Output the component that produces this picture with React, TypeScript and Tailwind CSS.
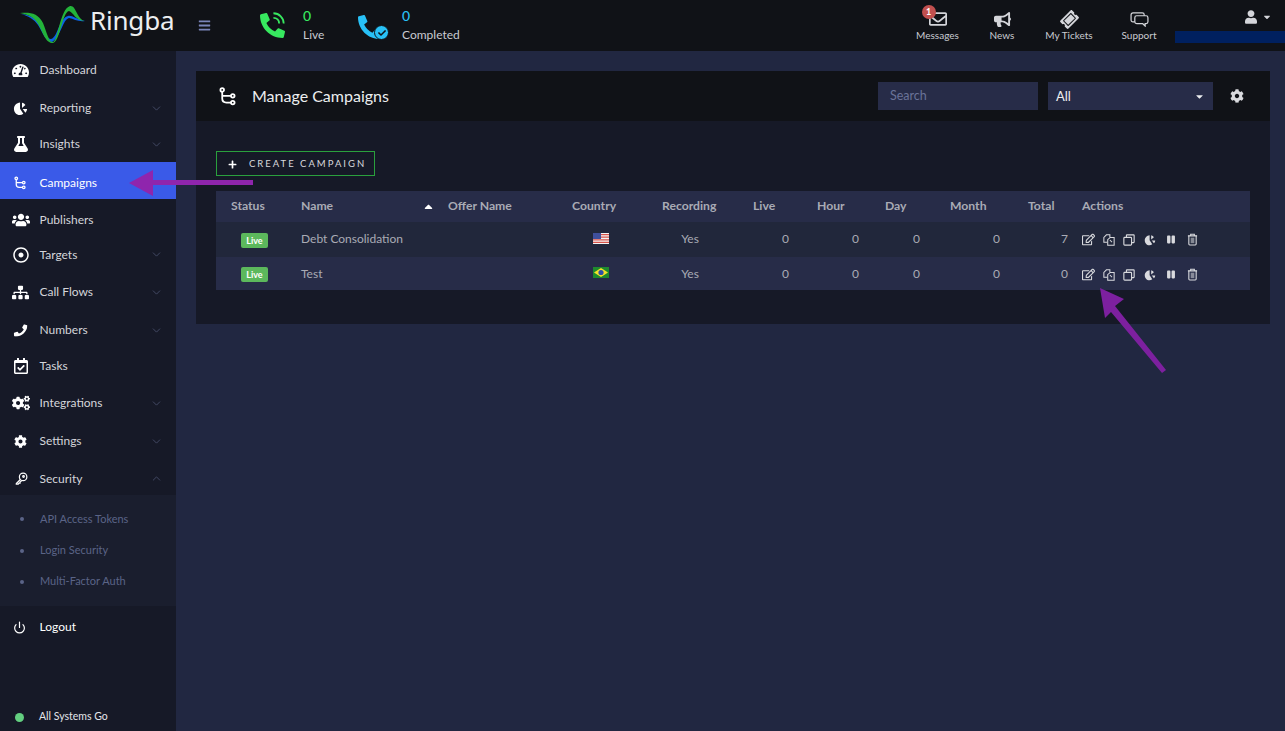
import type { ReactNode } from "react";
import { ChevronDown, ChevronUp, Power } from "lucide-react";
import {
  FaBars,
  FaBullhorn,
  FaCaretDown,
  FaCaretUp,
  FaCheck,
  FaCog,
  FaCogs,
  FaFlask,
  FaPause,
  FaPhone,
  FaPhoneAlt,
  FaPlus,
  FaRegCalendarCheck,
  FaRegDotCircle,
  FaRegEdit,
  FaRegEnvelope,
  FaSitemap,
  FaTachometerAlt,
  FaTicketAlt,
  FaUser,
  FaUsers,
} from "react-icons/fa";

function PieIcon({ className }: { className?: string }) {
  return (
    <svg viewBox="0 0 16 16" className={className} fill="currentColor">
      <path d="M7.5 1.5 V8.2 L11 13.6 C9.8 14.5 8.6 15 7.2 15 C3.6 15 1 12 1 8.3 C1 4.8 3.8 1.8 7.5 1.5 Z" />
      <path d="M9.6 1.8 C11.2 2.2 12.4 3 13.2 4.2 L9.6 7.4 Z" />
      <path d="M10.4 8.6 L15 8.6 C15 10 14.4 11.2 13.2 12.4 Z" />
    </svg>
  );
}

function BranchIcon({ className }: { className?: string }) {
  return (
    <svg viewBox="0 0 16 18" className={className} fill="none" stroke="currentColor" strokeWidth="1.7">
      <circle cx="3" cy="2.8" r="1.7" />
      <circle cx="13" cy="8.4" r="1.7" />
      <circle cx="13" cy="14.8" r="1.7" />
      <path d="M3 4.5 V11 C3 13.6 5 14.8 7 14.8 H11.3 M3.4 8.4 H11.3" />
    </svg>
  );
}

function KeyIcon({ className }: { className?: string }) {
  return (
    <svg viewBox="0 0 16 16" className={className} fill="none" stroke="currentColor" strokeWidth="1.5">
      <circle cx="10" cy="6" r="4.6" />
      <circle cx="10.5" cy="5.5" r="1" />
      <path d="M6.6 9.2 L1.6 14.2 V15 H4 L5 13.6 H6.2 V12.4 L8 11" />
    </svg>
  );
}

function CopyIcon({ className }: { className?: string }) {
  return (
    <svg viewBox="0 0 14 14" className={className} fill="none" stroke="currentColor" strokeWidth="1.2">
      <path d="M5 9.5 H1 V4 L4 1 H8 V4" />
      <path d="M5.5 6.5 L8.5 4 H13 V13 H5.5 Z" />
      <path d="M8 7 L10.5 9.5" />
    </svg>
  );
}

function CloneIcon({ className }: { className?: string }) {
  return (
    <svg viewBox="0 0 14 14" className={className} fill="none" stroke="currentColor" strokeWidth="1.3">
      <rect x="1" y="4" width="9" height="9" rx="1" />
      <path d="M4 4 V1.6 C4 1.2 4.3 1 4.6 1 H12.4 C12.8 1 13 1.2 13 1.6 V9.4 C13 9.8 12.8 10 12.4 10 H10" />
    </svg>
  );
}

function TrashIcon({ className }: { className?: string }) {
  return (
    <svg viewBox="0 0 12 14" className={className} fill="none" stroke="currentColor" strokeWidth="1.2">
      <path d="M1 3 H11 M4 3 V1.2 H8 V3" />
      <path d="M2 3 V12 C2 12.6 2.4 13 3 13 H9 C9.6 13 10 12.6 10 12 V3" />
      <rect x="4" y="5" width="4" height="6" fill="currentColor" fillOpacity="0.55" stroke="none" />
    </svg>
  );
}

function SupportIcon({ className }: { className?: string }) {
  return (
    <svg viewBox="0 0 20 16" className={className} fill="none" stroke="currentColor" strokeWidth="1.3">
      <path d="M5 10.5 H3 C1.8 10.5 1 9.7 1 8.6 V3 C1 1.9 1.8 1 3 1 H13 C14.2 1 15 1.9 15 3 V4" />
      <path d="M7 4 H17 C18.2 4 19 4.8 19 6 V10.5 C19 11.7 18.2 12.5 17 12.5 H16 V15 L13.5 12.5 H7 C5.8 12.5 5 11.7 5 10.5 V6 C5 4.8 5.8 4 7 4 Z" />
    </svg>
  );
}

function Logo() {
  return (
    <svg viewBox="0 0 70 40" className="w-[70px] h-[40px] shrink-0">
      <path
        d="M1 10 C12 11 18 15 24 27 C28 35 30 36 33 34 C38 30 40 14 48 12 C52 11 56 15 65 17 C58 18 54 15 49 14 C43 15 40 34 32 38 C26 38 23 29 18 21 C14 15 8 12 1 10 Z"
        fill="#0b63e5"
      />
      <path
        d="M0 9 C10 8 18 9 23 19 C27 29 29 39 33 38 C38 37 40 5 50 2 C56 1 56 13 64 17 C56 17 53 8 49 7 C42 8 40 40 32 39 C24 38 22 24 16 17 C12 12 6 10 0 9 Z"
        fill="#23b33a"
      />
    </svg>
  );
}

function UsFlag() {
  return (
    <svg viewBox="0 0 16 11" className="w-4 h-[11px] mx-auto">
      <rect width="16" height="11" fill="#f3f3f3" />
      <path d="M0 1h16v1.2H0zM0 3.6h16v1.2H0zM0 6.2h16v1.2H0zM0 8.8h16v1.2H0z" fill="#d9534a" />
      <rect width="8" height="6" fill="#3f4f9c" />
    </svg>
  );
}

function BrFlag() {
  return (
    <svg viewBox="0 0 16 11" className="w-4 h-[11px] mx-auto">
      <rect width="16" height="11" fill="#1e8a2e" />
      <path d="M8 1 L15 5.5 L8 10 L1 5.5 Z" fill="#f4e32a" />
      <circle cx="8" cy="5.5" r="2.6" fill="#2f4fa8" />
    </svg>
  );
}

type NavItem = { label: string; icon: ReactNode; row: string; chevron?: boolean };

const navTop: NavItem[] = [
  { label: "Dashboard", icon: <FaTachometerAlt className="w-[17px] h-[17px]" />, row: "h-[38px]" },
  { label: "Reporting", icon: <PieIcon className="w-[15px] h-[15px]" />, row: "h-[37px] pt-[1px]", chevron: true },
  { label: "Insights", icon: <FaFlask className="w-[16px] h-[16px]" />, row: "h-[36px]", chevron: true },
];

const navMiddle: NavItem[] = [
  { label: "Publishers", icon: <FaUsers className="w-[18px] h-[18px]" />, row: "h-[38px] pt-[3px]" },
  { label: "Targets", icon: <FaRegDotCircle className="w-[16px] h-[16px]" />, row: "h-[36px] pb-[1px]", chevron: true },
  { label: "Call Flows", icon: <FaSitemap className="w-[17px] h-[17px]" />, row: "h-[38px]", chevron: true },
  { label: "Numbers", icon: <FaPhone className="w-[13px] h-[13px] rotate-[5deg]" />, row: "h-[38px]", chevron: true },
  { label: "Tasks", icon: <FaRegCalendarCheck className="w-4 h-4" />, row: "h-[35px] pb-[2px]" },
  { label: "Integrations", icon: <FaCogs className="w-[18px] h-[18px]" />, row: "h-[38px]", chevron: true },
  { label: "Settings", icon: <FaCog className="w-[13px] h-[13px]" />, row: "h-[39px] pb-[1px]", chevron: true },
];

function NavRow({ item }: { item: NavItem }) {
  return (
    <div className={"flex items-center text-[12px] text-[#d4d5da] pr-[13px] pl-[0.5px] " + item.row}>
      <span className="w-[39px] flex justify-center pl-[3px] pr-[2px] text-white shrink-0">{item.icon}</span>
      <span className="flex-1">{item.label}</span>
      {item.chevron && <ChevronDown className="w-[13px] h-[13px] text-[#4b5270]" strokeWidth={1.5} />}
    </div>
  );
}

function Sidebar() {
  return (
    <aside className="w-[176px] shrink-0 bg-[#161927] flex flex-col relative">
      {navTop.map((item) => (
        <NavRow key={item.label} item={item} />
      ))}
      <div className="h-[37px] bg-[#3a5ae8] flex items-center text-[12px] text-white pt-[4px] pl-[0.5px]">
        <span className="w-[39px] flex justify-center text-white">
          <BranchIcon className="w-3 h-3.5" />
        </span>
        Campaigns
      </div>
      {navMiddle.map((item) => (
        <NavRow key={item.label} item={item} />
      ))}
      <div className="h-[34px] pt-[1px] flex items-center text-[12px] text-[#d4d5da] pr-[13px] pl-[0.5px]">
        <span className="w-[39px] flex justify-center text-white pl-[2px]">
          <KeyIcon className="w-[13px] h-[13px]" />
        </span>
        <span className="flex-1">Security</span>
        <ChevronUp className="w-[13px] h-[13px] text-[#4b5270]" strokeWidth={1.5} />
      </div>
      <div className="h-[111px] bg-[#1a1e2e] pt-[8px] text-[11px] text-[#5a6487]">
        <div className="h-[32px] flex items-center pl-[20px]">
          <span className="w-1 h-1 rounded-full bg-[#5a6487] mr-[16px]" />
          API Access Tokens
        </div>
        <div className="h-[31px] flex items-center pl-[20px]">
          <span className="w-1 h-1 rounded-full bg-[#5a6487] mr-[16px]" />
          Login Security
        </div>
        <div className="h-[31px] flex items-center pl-[20px]">
          <span className="w-1 h-1 rounded-full bg-[#5a6487] mr-[16px]" />
          Multi-Factor Auth
        </div>
      </div>
      <div className="h-[42px] flex items-center text-[12px] text-white pl-[0.5px]">
        <span className="w-[39px] flex justify-center pr-[1px]">
          <Power className="w-[13px] h-[13px]" strokeWidth={2.2} />
        </span>
        Logout
      </div>
      <div className="mt-auto h-[28px] flex items-center text-[10.5px] text-[#e4e5ea]">
        <span className="w-[39px] flex justify-center pr-[1px]">
          <span className="w-[9px] h-[9px] rounded-full bg-[#63cf80]" />
        </span>
        All Systems Go
      </div>
    </aside>
  );
}

function TopItem({ label, width, children }: { label: string; width: string; children: ReactNode }) {
  return (
    <div className={"flex flex-col items-center pt-[10px] text-[10px] text-[#c9cbd1] " + width}>
      <div className="h-[18px] flex items-center text-[#d4d5da]">{children}</div>
      <div className="leading-[14px]">{label}</div>
    </div>
  );
}

function Header() {
  return (
    <header className="h-[51px] bg-[#101217] flex shrink-0">
      <div className="w-[198px] flex items-start pl-[20px] pt-[4px]">
        <Logo />
        <span className="font-['Noto_Sans',sans-serif] text-[26px] leading-[36px] text-[#eceef0] tracking-[-0.2px] mt-[-2px]">Ringba</span>
      </div>
      <div className="w-[62px] pt-[19px]">
        <FaBars className="w-[13px] h-[13px] text-[#7a85bb]" />
      </div>
      <div className="w-[98px] flex pt-[11px]">
        <div className="relative w-[43px] pt-[1px]">
          <FaPhoneAlt className="w-[25px] h-[25px] text-[#37e85f] mt-[1px]" />
          <svg viewBox="0 0 14 14" className="absolute left-[10px] top-[0px] w-[16px] h-[16px]" fill="none" stroke="#37e85f" strokeWidth="1.6">
            <path d="M3 6 C6 6 8 8 8 11" />
            <path d="M3 2 C8 2 12 6 12 11" />
          </svg>
        </div>
        <div>
          <div className="text-[14px] leading-[10px] mt-[-1px] h-[17px] text-[#37e85f] font-medium pt-[1px]">0</div>
          <div className="text-[12px] leading-[16px] text-[#c9cbd1]">Live</div>
        </div>
      </div>
      <div className="flex pt-[11px]">
        <div className="relative w-[44px]">
          <FaPhoneAlt className="w-[24px] h-[24px] text-[#28c1f7] mt-[4px]" />
          <span className="absolute left-[16px] top-[14px] w-[15px] h-[15px] rounded-full bg-[#28c1f7] border-[1px] border-[#101217] flex items-center justify-center">
            <FaCheck className="w-[8px] h-[8px] text-[#101217]" />
          </span>
        </div>
        <div>
          <div className="text-[14px] leading-[10px] mt-[-1px] h-[17px] text-[#28c1f7] font-medium pt-[1px]">0</div>
          <div className="text-[12px] leading-[16px] text-[#c9cbd1]">Completed</div>
        </div>
      </div>
      <div className="ml-auto flex">
        <TopItem label="Messages" width="w-[63px]">
          <span className="relative">
            <FaRegEnvelope className="w-[18px] h-[18px]" />
            <span className="absolute left-[-7px] top-[-5px] w-[14px] h-[14px] rounded-full bg-[#c1504f] text-white text-[9px] leading-[14px] text-center font-bold">1</span>
          </span>
        </TopItem>
        <TopItem label="News" width="w-[66px]">
          <FaBullhorn className="w-[17px] h-[17px]" />
        </TopItem>
        <TopItem label="My Tickets" width="w-[68px]">
          <FaTicketAlt className="w-[17px] h-[17px] -rotate-45" />
        </TopItem>
        <TopItem label="Support" width="w-[72px]">
          <SupportIcon className="w-[19px] h-[15px]" />
        </TopItem>
        <div className="w-[110px] flex flex-col">
          <div className="h-[31px] flex items-center pl-[70px] pt-[3px] text-[#d4d5da]">
            <FaUser className="w-3 h-[14px]" />
            <FaCaretDown className="w-[10px] h-[10px] ml-[5px]" />
          </div>
          <div className="h-[12px] bg-[#00205f]" />
        </div>
      </div>
    </header>
  );
}

const cell = "text-[12px] text-[#a9abb5] font-normal";

function ActionIcons() {
  return (
    <div className="flex items-center text-[#d9dade]">
      <FaRegEdit className="w-[13px] h-[13px]" />
      <CopyIcon className="w-3 h-3 ml-[8px]" />
      <CloneIcon className="w-3 h-3 ml-[8px]" />
      <PieIcon className="w-3 h-3 ml-[9px]" />
      <FaPause className="w-[8px] h-[9px] ml-[11px]" />
      <TrashIcon className="w-[11px] h-[13px] ml-[12px]" />
    </div>
  );
}

function Row({ name, flag, total, rowClass, textPad, iconPad }: { name: string; flag: ReactNode; total: string; rowClass: string; textPad: string; iconPad: string }) {
  return (
    <tr className={rowClass}>
      <td className="pl-[25px] pb-[2px]">
        <span className="inline-flex w-[27px] h-[15px] items-center justify-center rounded-[2px] bg-[#5cb85c] text-white text-[9px] font-bold align-middle">Live</span>
      </td>
      <td className={"pl-[16px] " + textPad + " " + cell}>{name}</td>
      <td />
      <td className="pr-[3px] pb-[2px]">{flag}</td>
      <td className={"text-center pr-[5px] " + textPad + " " + cell}>Yes</td>
      <td className={"text-right pr-[13px] " + textPad + " " + cell}>0</td>
      <td className={"text-right pr-[11px] " + textPad + " " + cell}>0</td>
      <td className={"text-right pr-[15px] " + textPad + " " + cell}>0</td>
      <td className={"text-right pr-[13px] " + textPad + " " + cell}>0</td>
      <td className={"text-right pr-[4px] " + textPad + " " + cell}>{total}</td>
      <td className={"pl-[10px] " + iconPad}>
        <ActionIcons />
      </td>
    </tr>
  );
}

function CampaignTable() {
  const th = "pl-[15px] text-left text-[12.2px] font-bold text-[#a9abb5]";
  return (
    <table className="w-full table-fixed border-collapse">
      <colgroup>
        <col className="w-[69px]" />
        <col className="w-[148px]" />
        <col className="w-[124px]" />
        <col className="w-[90px]" />
        <col className="w-[91px]" />
        <col className="w-[64px]" />
        <col className="w-[68px]" />
        <col className="w-[65px]" />
        <col className="w-[78px]" />
        <col className="w-[59px]" />
        <col />
      </colgroup>
      <thead>
        <tr className="h-[31px] bg-[#272c48]">
          <th className={th}>Status</th>
          <th className="pl-[16px] text-left text-[12.2px] font-bold text-[#a9abb5]">
            <div className="flex items-center justify-between">
              Name
              <FaCaretUp className="w-[13px] h-[13px] text-white mr-[-2px]" />
            </div>
          </th>
          <th className={th}>Offer Name</th>
          <th className={th}>Country</th>
          <th className={th}>Recording</th>
          <th className={th}>Live</th>
          <th className={th}>Hour</th>
          <th className={th}>Day</th>
          <th className={th}>Month</th>
          <th className={th}>Total</th>
          <th className="pl-[10px] text-left text-[12.2px] font-bold text-[#a9abb5]">Actions</th>
        </tr>
      </thead>
      <tbody>
        <Row name="Debt Consolidation" flag={<UsFlag />} total="7" rowClass="h-[35px] bg-[#21273b]" textPad="pb-[2px]" iconPad="pb-0" />
        <Row name="Test" flag={<BrFlag />} total="0" rowClass="h-[33px] bg-[#272c48]" textPad="pb-0" iconPad="pt-[2px]" />
      </tbody>
    </table>
  );
}

function Panel() {
  return (
    <section className="bg-[#161927]">
      <div className="h-[50px] bg-[#101217] flex items-center pl-[23px] pr-[26px]">
        <BranchIcon className="w-[17px] h-[19px] text-white" />
        <h1 className="ml-[16px] text-[16px] text-[#eceef0] font-normal">Manage Campaigns</h1>
        <div className="ml-auto flex items-center">
          <div className="w-[160px] h-[28px] bg-[#272c48] text-[12.5px] text-[#6a7398] pl-[12px] pt-[1px] flex items-center">Search</div>
          <div className="w-[165px] h-[28px] ml-[10px] bg-[#272c48] text-[13px] text-[#eceef0] pl-[8px] pr-[8px] pt-[1px] flex items-center justify-between">
            All
            <FaCaretDown className="w-[11px] h-[11px]" />
          </div>
          <FaCog className="ml-[17px] w-[14px] h-[14px] text-[#d9dade]" />
        </div>
      </div>
      <div className="px-[20px] pt-[30px] pb-[34px]">
        <button className="h-[25px] w-[159px] border border-[#2aa03d] flex items-center pl-[11px] pt-[1px] text-[9.5px] tracking-[2px] text-[#d9dade]">
          <FaPlus className="w-[9px] h-[9px] mr-[12px] text-white" />
          CREATE CAMPAIGN
        </button>
        <div className="mt-[15px]">
          <CampaignTable />
        </div>
      </div>
    </section>
  );
}

function Arrows() {
  return (
    <>
      <svg viewBox="0 0 124 26" className="absolute left-[129px] top-[170px] w-[124px] h-[26px]">
        <path d="M0 13 L24 0 V10 H124 V15 H24 V26 Z" fill="#8f25ad" />
      </svg>
      <svg viewBox="0 0 70 86" className="absolute left-[1100px] top-[288px] w-[70px] h-[86px]">
        <path d="M0 0 L24 11 L15 18 L66 82 L62 85 L11 24 L5 30 Z" fill="#7d209f" />
      </svg>
    </>
  );
}

export default function App() {
  return (
    <div className="h-screen w-full overflow-hidden bg-[#212741] flex flex-col relative font-['Lato','Liberation_Sans',sans-serif]">
      <Header />
      <div className="flex flex-1 min-h-0">
        <Sidebar />
        <main className="flex-1 pl-[20px] pr-[15px] pt-[20px]">
          <Panel />
        </main>
      </div>
      <Arrows />
    </div>
  );
}
